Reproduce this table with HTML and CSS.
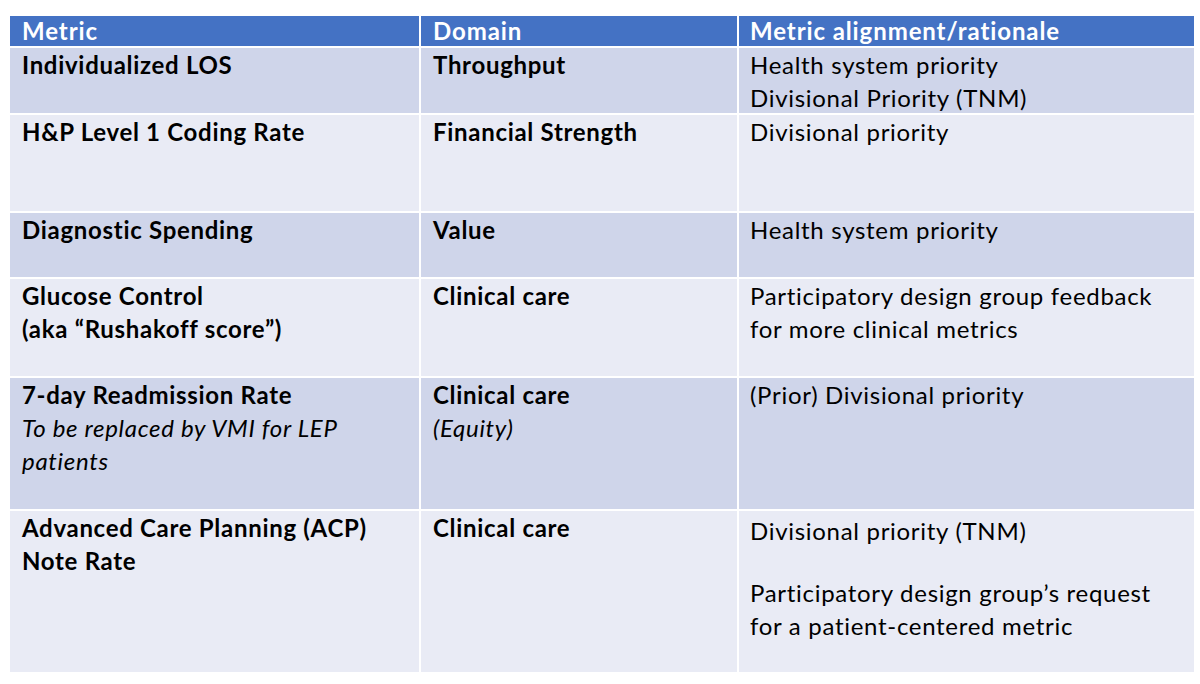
FILE: index.html
```html
<!DOCTYPE html>
<html>
<head>
<meta charset="utf-8">
<link rel="stylesheet" href="styles.css">
</head>
<body>
<div class="table">
  <div class="cell head">Metric</div>
  <div class="cell head">Domain</div>
  <div class="cell head">Metric alignment/rationale</div>

  <div class="cell odd b">Individualized LOS</div>
  <div class="cell odd b">Throughput</div>
  <div class="cell odd"><p>Health system priority</p><p>Divisional Priority (TNM)</p></div>

  <div class="cell even b">H&amp;P Level 1 Coding Rate</div>
  <div class="cell even b">Financial Strength</div>
  <div class="cell even"><p>Divisional priority</p></div>

  <div class="cell odd b">Diagnostic Spending</div>
  <div class="cell odd b">Value</div>
  <div class="cell odd"><p>Health system priority</p></div>

  <div class="cell even b"><p>Glucose Control</p><p>(aka “Rushakoff score”)</p></div>
  <div class="cell even b">Clinical care</div>
  <div class="cell even"><p>Participatory design group feedback</p><p>for more clinical metrics</p></div>

  <div class="cell odd"><p class="b">7-day Readmission Rate</p><p class="i">To be replaced by VMI for LEP patients</p></div>
  <div class="cell odd"><p class="b">Clinical care</p><p class="i">(Equity)</p></div>
  <div class="cell odd"><p>(Prior) Divisional priority</p></div>

  <div class="cell even b"><p>Advanced Care Planning (ACP)</p><p>Note Rate</p></div>
  <div class="cell even b">Clinical care</div>
  <div class="cell even last"><p>Divisional priority (TNM)</p><p class="blank"></p><p>Participatory design group’s request</p><p>for a patient-centered metric</p></div>
</div>
</body>
</html>
```
FILE: styles.css
```css
html, body {
  margin: 0;
  padding: 0;
  background: #ffffff;
}
body {
  padding: 16px 0 0 10px;
  font-family: Lato, "Open Sans", sans-serif;
  color: #000000;
}
.table {
  display: grid;
  grid-template-columns: 409px 316px 455px;
  grid-template-rows: 30px 65px 96px 64px 97px 131px 161px;
  column-gap: 2px;
  row-gap: 2px;
  width: 1184px;
}
.cell {
  font-size: 24px;
  line-height: 33px;
  letter-spacing: 0.7px;
  padding: 0 12px;
  box-sizing: border-box;
  overflow: hidden;
}
.cell p {
  margin: 0;
}
.head {
  background: #4472c4;
  color: #ffffff;
  font-weight: 700;
  line-height: 30px;
  letter-spacing: 0.9px;
  margin-bottom: 2px;
  height: 30px;
}
.table .cell:nth-child(3n) {
  padding-left: 11px;
}
.odd {
  background: #cfd5ea;
}
.even {
  background: #e9ebf5;
}
.b {
  font-weight: 700;
}
.i {
  font-style: italic;
  font-weight: 400;
}
.blank {
  height: 29px;
}
.last {
  padding-top: 3px;
}
```
